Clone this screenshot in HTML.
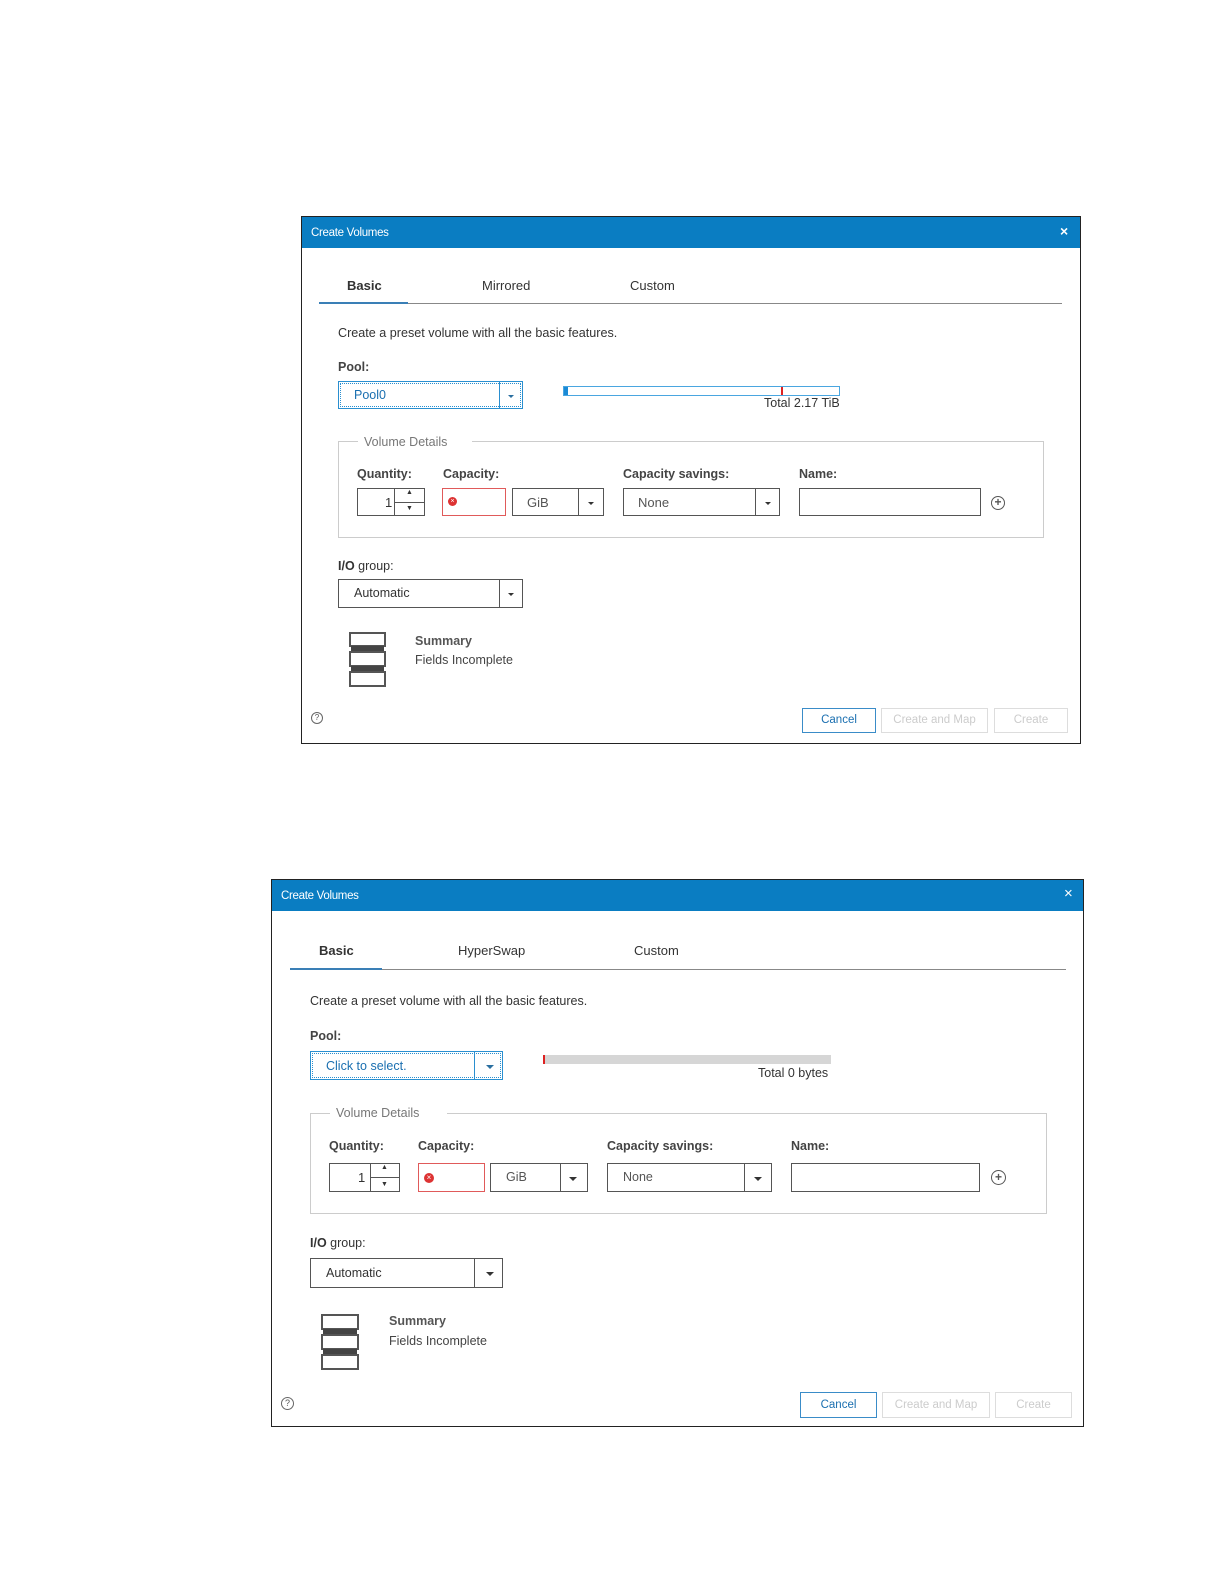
<!DOCTYPE html>
<html><head><meta charset="utf-8"><style>
*{margin:0;padding:0;box-sizing:border-box}
body{width:1224px;height:1584px;background:#fff;position:relative;font-family:"Liberation Sans",Arial,sans-serif;color:#333;overflow:hidden}
.a{position:absolute}
.t{position:absolute;white-space:nowrap;line-height:1}
.box{position:absolute;border:1px solid #555;background:#fff}
.b{font-weight:bold;color:#444}
.car{position:absolute;width:0;height:0;border-left:3px solid transparent;border-right:3px solid transparent;border-top:3px solid #333}
.btn{position:absolute;border:1px solid #ddd;color:#ccc;text-align:center;background:#fff}
</style></head><body>

<!-- Dialog 1 -->
<div class="a" style="left:301px;top:216px;width:780px;height:528px;border:1px solid #222"></div>
<div class="a" style="left:302px;top:217px;width:778px;height:31px;background:#0a7dc2"></div>
<div class="t" style="left:311px;top:228px;font-size:11.5px;color:#fff;letter-spacing:-0.3px">Create Volumes</div>
<div class="t" style="left:1060px;top:224px;font-size:14px;color:#fff;font-weight:bold">×</div>
<div class="t b" style="left:347px;top:279px;font-size:13px;color:#333">Basic</div>
<div class="t" style="left:482px;top:279px;font-size:13px">Mirrored</div>
<div class="t" style="left:630px;top:279px;font-size:13px">Custom</div>
<div class="a" style="left:319px;top:303px;width:743px;height:1px;background:#888"></div>
<div class="a" style="left:319px;top:302px;width:89px;height:2px;background:#3a7fb6"></div>
<div class="t" style="left:338px;top:327px;font-size:12.6px">Create a preset volume with all the basic features.</div>
<div class="t b" style="left:338px;top:361px;font-size:12.5px">Pool:</div>
<div class="a" style="left:338px;top:381px;width:185px;height:28px;border:1px solid #2a8fd0;outline:1px dotted #2a8fd0;outline-offset:-3px"></div>
<div class="a" style="left:499px;top:382px;width:1px;height:26px;background:#2a8fd0"></div>
<div class="car" style="left:508px;top:395px;border-top-color:#2a6fa0"></div>
<div class="t" style="left:354px;top:389px;font-size:12.5px;color:#1a6fb0">Pool0</div>
<div class="a" style="left:563px;top:386px;width:277px;height:10px;border:1px solid #4aa6e0;background:#fff"></div>
<div class="a" style="left:564px;top:387px;width:4px;height:8px;background:#1a8ad6"></div>
<div class="a" style="left:781px;top:387px;width:2px;height:8px;background:#d22"></div>
<div class="t" style="left:764px;top:397px;font-size:12.5px;color:#333">Total 2.17 TiB</div>
<div class="a" style="left:338px;top:441px;width:706px;height:97px;border:1px solid #ccc;border-top:none"></div>
<div class="a" style="left:338px;top:441px;width:20px;height:1px;background:#ccc"></div>
<div class="a" style="left:472px;top:441px;width:572px;height:1px;background:#ccc"></div>
<div class="t" style="left:364px;top:436px;font-size:12.5px;color:#777">Volume Details</div>
<div class="t b" style="left:357px;top:468px;font-size:12.5px">Quantity:</div>
<div class="t b" style="left:443px;top:468px;font-size:12.5px">Capacity:</div>
<div class="t b" style="left:623px;top:468px;font-size:12.5px">Capacity savings:</div>
<div class="t b" style="left:799px;top:468px;font-size:12.5px">Name:</div>
<div class="box" style="left:357px;top:488px;width:68px;height:28px"></div>
<div class="a" style="left:394px;top:489px;width:1px;height:26px;background:#555"></div>
<div class="a" style="left:395px;top:502px;width:30px;height:1px;background:#555"></div>
<div class="t" style="left:385px;top:496px;font-size:13px">1</div>
<div class="t" style="left:406px;top:489px;font-size:7px">▲</div>
<div class="t" style="left:406px;top:505px;font-size:7px">▼</div>
<div class="a" style="left:442px;top:488px;width:64px;height:28px;border:1px solid #e05a5a"></div>
<div class="a" style="left:448px;top:497px;width:9px;height:9px;border-radius:50%;background:#d33;color:#fff;font-size:7px;line-height:9px;text-align:center">×</div>
<div class="box" style="left:512px;top:488px;width:92px;height:28px"></div>
<div class="a" style="left:578px;top:489px;width:1px;height:26px;background:#555"></div>
<div class="car" style="left:588px;top:502px"></div>
<div class="t" style="left:527px;top:496px;font-size:13px;color:#555">GiB</div>
<div class="box" style="left:623px;top:488px;width:157px;height:28px"></div>
<div class="a" style="left:755px;top:489px;width:1px;height:26px;background:#555"></div>
<div class="car" style="left:765px;top:502px"></div>
<div class="t" style="left:638px;top:496px;font-size:13px;color:#555">None</div>
<div class="box" style="left:799px;top:488px;width:182px;height:28px"></div>
<div class="a" style="left:991px;top:496px;width:14px;height:14px;border:1.5px solid #555;border-radius:50%"></div>
<div class="t" style="left:993px;top:496px;font-size:12px;color:#555;font-weight:bold;width:10px;text-align:center">+</div>
<div class="t" style="left:338px;top:560px;font-size:12.5px;color:#333"><b>I/O</b> group:</div>
<div class="box" style="left:338px;top:579px;width:185px;height:29px"></div>
<div class="a" style="left:499px;top:580px;width:1px;height:27px;background:#555"></div>
<div class="car" style="left:508px;top:593px"></div>
<div class="t" style="left:354px;top:587px;font-size:12.5px">Automatic</div>
<div class="a" style="left:349px;top:632px;width:37px;height:15px;border:2px solid #555"></div>
<div class="a" style="left:351px;top:646px;width:33px;height:6px;background:#444"></div>
<div class="a" style="left:349px;top:651px;width:37px;height:16px;border:2px solid #555"></div>
<div class="a" style="left:351px;top:666px;width:33px;height:6px;background:#444"></div>
<div class="a" style="left:349px;top:671px;width:37px;height:16px;border:2px solid #555"></div>
<div class="t" style="left:415px;top:635px;font-size:12.5px;color:#555;font-weight:bold">Summary</div>
<div class="t" style="left:415px;top:654px;font-size:12.5px;color:#444">Fields Incomplete</div>
<div class="a" style="left:311px;top:712px;width:12px;height:12px;border:1px solid #666;border-radius:50%;font-size:8px;text-align:center;line-height:10px;color:#555">?</div>
<div class="btn" style="left:802px;top:708px;width:74px;height:25px;border-color:#3a8cc8;color:#1a6fb0;font-size:11.5px;line-height:23px">Cancel</div>
<div class="btn" style="left:881px;top:708px;width:107px;height:25px;font-size:11.5px;line-height:23px">Create and Map</div>
<div class="btn" style="left:994px;top:708px;width:74px;height:25px;font-size:11.5px;line-height:23px">Create</div>

<!-- Dialog 2 -->
<div class="a" style="left:271px;top:879px;width:813px;height:548px;border:1px solid #222"></div>
<div class="a" style="left:272px;top:880px;width:811px;height:31px;background:#0a7dc2"></div>
<div class="t" style="left:281px;top:891px;font-size:11.5px;color:#fff;letter-spacing:-0.3px">Create Volumes</div>
<div class="t" style="left:1064px;top:886px;font-size:15px;color:#fff">×</div>
<div class="t b" style="left:319px;top:944px;font-size:13px;color:#333">Basic</div>
<div class="t" style="left:458px;top:944px;font-size:13px">HyperSwap</div>
<div class="t" style="left:634px;top:944px;font-size:13px">Custom</div>
<div class="a" style="left:290px;top:969px;width:776px;height:1px;background:#888"></div>
<div class="a" style="left:290px;top:968px;width:92px;height:2px;background:#3a7fb6"></div>
<div class="t" style="left:310px;top:995px;font-size:12.5px">Create a preset volume with all the basic features.</div>
<div class="t b" style="left:310px;top:1030px;font-size:12.5px">Pool:</div>
<div class="a" style="left:310px;top:1051px;width:193px;height:29px;border:1px solid #2a8fd0;outline:1px dotted #2a8fd0;outline-offset:-3px"></div>
<div class="a" style="left:474px;top:1052px;width:1px;height:27px;background:#2a8fd0"></div>
<div class="car" style="left:486px;top:1065px;border-left-width:4px;border-right-width:4px;border-top:4px solid #2a6fa0"></div>
<div class="t" style="left:326px;top:1060px;font-size:12.5px;color:#1a6fb0">Click to select.</div>
<div class="a" style="left:543px;top:1055px;width:288px;height:9px;background:#d6d6d6"></div>
<div class="a" style="left:543px;top:1055px;width:2px;height:9px;background:#d22"></div>
<div class="t" style="left:758px;top:1067px;font-size:12.5px;color:#333">Total 0 bytes</div>
<div class="a" style="left:310px;top:1113px;width:737px;height:101px;border:1px solid #ccc;border-top:none"></div>
<div class="a" style="left:310px;top:1113px;width:20px;height:1px;background:#ccc"></div>
<div class="a" style="left:447px;top:1113px;width:600px;height:1px;background:#ccc"></div>
<div class="t" style="left:336px;top:1107px;font-size:12.5px;color:#777">Volume Details</div>
<div class="t b" style="left:329px;top:1140px;font-size:12.5px">Quantity:</div>
<div class="t b" style="left:418px;top:1140px;font-size:12.5px">Capacity:</div>
<div class="t b" style="left:607px;top:1140px;font-size:12.5px">Capacity savings:</div>
<div class="t b" style="left:791px;top:1140px;font-size:12.5px">Name:</div>
<div class="box" style="left:329px;top:1163px;width:71px;height:29px"></div>
<div class="a" style="left:370px;top:1164px;width:1px;height:27px;background:#555"></div>
<div class="a" style="left:371px;top:1177px;width:29px;height:1px;background:#555"></div>
<div class="t" style="left:358px;top:1171px;font-size:13px">1</div>
<div class="t" style="left:381px;top:1164px;font-size:7px">▲</div>
<div class="t" style="left:381px;top:1181px;font-size:7px">▼</div>
<div class="a" style="left:418px;top:1163px;width:67px;height:29px;border:1px solid #e05a5a"></div>
<div class="a" style="left:424px;top:1173px;width:10px;height:10px;border-radius:50%;background:#d33;color:#fff;font-size:8px;line-height:10px;text-align:center">×</div>
<div class="box" style="left:490px;top:1163px;width:98px;height:29px"></div>
<div class="a" style="left:560px;top:1164px;width:1px;height:27px;background:#555"></div>
<div class="car" style="left:569px;top:1177px;border-left-width:4px;border-right-width:4px;border-top:4px solid #333"></div>
<div class="t" style="left:506px;top:1171px;font-size:12.5px;color:#555">GiB</div>
<div class="box" style="left:607px;top:1163px;width:165px;height:29px"></div>
<div class="a" style="left:744px;top:1164px;width:1px;height:27px;background:#555"></div>
<div class="car" style="left:754px;top:1177px;border-left-width:4px;border-right-width:4px;border-top:4px solid #333"></div>
<div class="t" style="left:623px;top:1171px;font-size:12.5px;color:#555">None</div>
<div class="box" style="left:791px;top:1163px;width:189px;height:29px"></div>
<div class="a" style="left:991px;top:1170px;width:15px;height:15px;border:1.5px solid #555;border-radius:50%"></div>
<div class="t" style="left:993px;top:1171px;font-size:12px;color:#555;font-weight:bold;width:11px;text-align:center">+</div>
<div class="t" style="left:310px;top:1237px;font-size:12.5px;color:#333"><b>I/O</b> group:</div>
<div class="box" style="left:310px;top:1258px;width:193px;height:30px"></div>
<div class="a" style="left:474px;top:1259px;width:1px;height:28px;background:#555"></div>
<div class="car" style="left:486px;top:1272px;border-left-width:4px;border-right-width:4px;border-top:4px solid #333"></div>
<div class="t" style="left:326px;top:1267px;font-size:12.5px">Automatic</div>
<div class="a" style="left:321px;top:1314px;width:38px;height:16px;border:2px solid #555"></div>
<div class="a" style="left:323px;top:1329px;width:34px;height:6px;background:#444"></div>
<div class="a" style="left:321px;top:1334px;width:38px;height:16px;border:2px solid #555"></div>
<div class="a" style="left:323px;top:1349px;width:34px;height:6px;background:#444"></div>
<div class="a" style="left:321px;top:1354px;width:38px;height:16px;border:2px solid #555"></div>
<div class="t" style="left:389px;top:1315px;font-size:12.5px;color:#555;font-weight:bold">Summary</div>
<div class="t" style="left:389px;top:1335px;font-size:12.5px;color:#444">Fields Incomplete</div>
<div class="a" style="left:281px;top:1397px;width:13px;height:13px;border:1px solid #666;border-radius:50%;font-size:9px;text-align:center;line-height:11px;color:#555">?</div>
<div class="btn" style="left:800px;top:1392px;width:77px;height:26px;border-color:#3a8cc8;color:#1a6fb0;font-size:11.5px;line-height:24px">Cancel</div>
<div class="btn" style="left:882px;top:1392px;width:108px;height:26px;font-size:11.5px;line-height:24px">Create and Map</div>
<div class="btn" style="left:995px;top:1392px;width:77px;height:26px;font-size:11.5px;line-height:24px">Create</div>
</body></html>
